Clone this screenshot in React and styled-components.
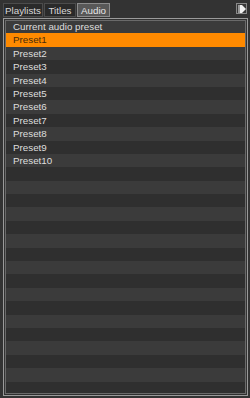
import React from 'react'
import styled, { createGlobalStyle } from 'styled-components'

const GlobalStyle = createGlobalStyle`
  html, body {
    margin: 0;
    padding: 0;
    background: #2b2b2b;
  }
`

const presets = ['Preset1', 'Preset2', 'Preset3', 'Preset4', 'Preset5', 'Preset6', 'Preset7', 'Preset8', 'Preset9', 'Preset10']
const TOTAL_ROWS = 28

const Panel = () => {
  const rows = ['Current audio preset', ...presets]
  while (rows.length < TOTAL_ROWS) rows.push('')

  return (
    <>
      <GlobalStyle />
      <Wrapper>
        <TabBar>
          <Tab $w={40}>Playlists</Tab>
          <Tab $w={32}>Titles</Tab>
          <Tab $w={33} $active>Audio</Tab>
          <MenuButton>
            <svg width='8' height='8' viewBox='0 0 8 8'>
              <path d='M1 0 L4 0 L8 4 L4 8 L1 8 Z' fill='#f2f2f2' />
              <rect x='0' y='0' width='2' height='8' fill='#9a9a9a' />
            </svg>
          </MenuButton>
        </TabBar>
        <List>
          {rows.map((label, i) => (
            <Row key={i} $selected={i === 1} $odd={i % 2 === 1}>
              {label}
            </Row>
          ))}
        </List>
      </Wrapper>
    </>
  )
}

const Wrapper = styled.div`
  width: 250px;
  height: 398px;
  background: #333333;
  display: flex;
  flex-direction: column;
  font-family: 'Liberation Sans', Arial, sans-serif;
  font-size: 9.8px;
  color: #dedede;
  box-sizing: border-box;
  padding: 0 2px 2px 3px;
`

const TabBar = styled.div`
  height: 18px;
  display: flex;
  align-items: flex-end;
  gap: 1px;
  box-sizing: border-box;
`

const Tab = styled.div`
  width: ${(p) => p.$w}px;
  height: 14px;
  margin-bottom: 1px;
  display: flex;
  align-items: center;
  justify-content: center;
  box-sizing: border-box;
  border: 1px solid ${(p) => (p.$active ? '#8c8c8c' : '#4c4c4c')};
  background: ${(p) => (p.$active ? '#585858' : '#2a2a2a')};
  color: ${(p) => (p.$active ? '#e6e6e6' : '#d8d8d8')};
`

const MenuButton = styled.div`
  margin-left: auto;
  margin-right: 1px;
  align-self: flex-start;
  margin-top: 3px;
  width: 11px;
  height: 11px;
  box-sizing: border-box;
  border: 1px solid #8a8a8a;
  background: #3a3a3a;
  display: flex;
  align-items: center;
  justify-content: center;
`

const List = styled.div`
  flex: 1;
  border: 1px solid #9a9a9a;
  outline: 1px solid #6a6a6a;
  outline-offset: -3px;
  padding: 1px;
  display: flex;
  flex-direction: column;
  overflow: hidden;
  box-sizing: border-box;
`

const Row = styled.div`
  height: 13.4px;
  flex: none;
  line-height: 13.4px;
  padding-left: 8px;
  white-space: nowrap;
  background: ${(p) => (p.$selected ? '#ff8a00' : p.$odd ? '#2f2f2f' : '#3b3b3b')};
  color: ${(p) => (p.$selected ? '#4a2c08' : '#dedede')};
`

export default Panel
